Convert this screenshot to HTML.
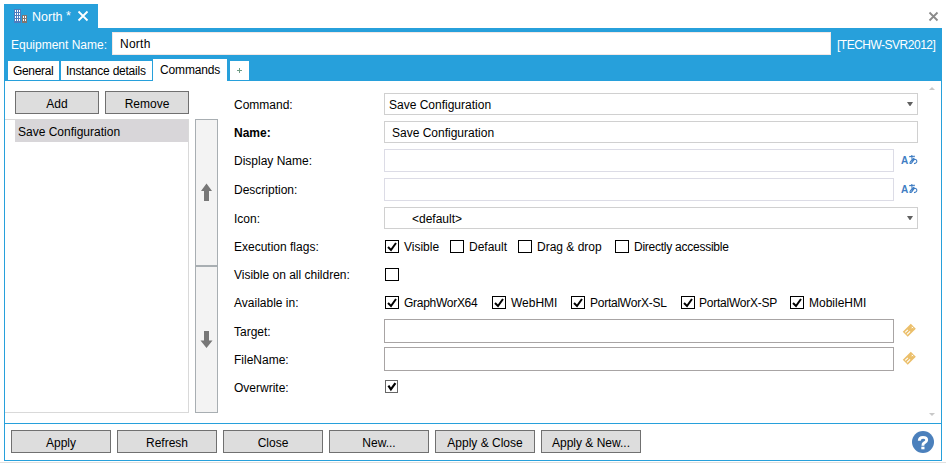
<!DOCTYPE html>
<html><head><meta charset="utf-8">
<style>
*{margin:0;padding:0;box-sizing:border-box}
html,body{width:946px;height:467px;overflow:hidden;background:#fff}
body{position:relative;font-family:"Liberation Sans",sans-serif;font-size:12px;color:#000}
.a{position:absolute}
.t{position:absolute;white-space:nowrap;line-height:14px;font-size:12px}
.blue{background:#27a0db}
.btn{position:absolute;background:#dddddd;border:1px solid #707070;text-align:center;line-height:24px;font-size:12px}
.cb{position:absolute;width:14px;height:13px;border:1px solid #000;background:#fff}
.cb svg{position:absolute;left:0;top:0}
.inp{position:absolute;border:1px solid #d0d0d0;background:#fff}
</style></head><body>

<!-- top tab -->
<div class="a blue" style="left:4px;top:4px;width:94px;height:24px"></div>
<svg class="a" style="left:14px;top:9px" width="14" height="14" viewBox="0 0 14 14">
  <rect x="0" y="0" width="7" height="14" fill="#4e7dbf"/>
  <g fill="#fff">
    <rect x="1" y="1" width="1" height="2"/><rect x="3" y="1" width="1" height="2"/><rect x="5" y="1" width="1" height="2"/>
    <rect x="1" y="4" width="1" height="2"/><rect x="3" y="4" width="1" height="2"/><rect x="5" y="4" width="1" height="2"/>
    <rect x="1" y="7" width="1" height="2"/><rect x="3" y="7" width="1" height="2"/><rect x="5" y="7" width="1" height="2"/>
    <rect x="1" y="10" width="1" height="2"/><rect x="3" y="10" width="1" height="2"/><rect x="5" y="10" width="1" height="2"/>
  </g>
  <rect x="8" y="6" width="5" height="8" fill="#83766f"/>
  <g fill="#fff">
    <rect x="9" y="7" width="1" height="2"/><rect x="11" y="7" width="1" height="2"/>
    <rect x="9" y="10" width="1" height="2"/><rect x="11" y="10" width="1" height="2"/>
  </g>
</svg>
<div class="t" style="left:32px;top:10px;color:#fff;font-size:12.5px">North <span style="position:relative;top:-1px">*</span></div>
<svg class="a" style="left:77px;top:10px" width="12" height="12" viewBox="0 0 12 12"><path d="M1.5 1.5L10.5 10.5M10.5 1.5L1.5 10.5" stroke="#fff" stroke-width="1.8"/></svg>

<!-- window close -->
<svg class="a" style="left:928px;top:11px" width="11" height="11" viewBox="0 0 11 11"><path d="M1.5 1.5L9.5 9.5M9.5 1.5L1.5 9.5" stroke="#8a8a8a" stroke-width="1.8"/></svg>

<!-- blue band -->
<div class="a blue" style="left:4px;top:28px;width:938px;height:53px"></div>
<div class="t" style="left:11px;top:38px;color:#fff">Equipment Name:</div>
<div class="a" style="left:112px;top:32px;width:719px;height:23px;background:#fff;border:1px solid #f2e8e6"></div>
<div class="t" style="left:120px;top:37px;letter-spacing:0.25px">North</div>
<div class="t" style="left:837px;top:38px;color:#fff;letter-spacing:-0.5px">[TECHW-SVR2012]</div>

<!-- tabs -->
<div class="a" style="left:8px;top:61px;width:51px;height:19px;background:#fff"></div>
<div class="t" style="left:13px;top:64px;letter-spacing:-0.32px">General</div>
<div class="a" style="left:61px;top:61px;width:91px;height:19px;background:#fff"></div>
<div class="t" style="left:66px;top:64px;letter-spacing:-0.23px">Instance details</div>
<div class="a" style="left:153px;top:59px;width:74px;height:23px;background:#fff"></div>
<div class="t" style="left:160px;top:63px;letter-spacing:-0.15px">Commands</div>
<div class="a" style="left:230px;top:61px;width:19px;height:19px;background:#fff"></div>
<svg class="a" style="left:237px;top:68px" width="5" height="5"><path d="M0 2.5H5M2.5 0V5" stroke="#6f9c86" stroke-width="1"/></svg>

<!-- content frame -->
<div class="a" style="left:4px;top:80px;width:938px;height:381px;border:1px solid #27a0db;border-top:1px solid #27a0db"></div>
<div class="a" style="left:153px;top:80px;width:74px;height:2px;background:#fff"></div>
<div class="a" style="left:5px;top:423px;width:936px;height:1px;background:#27a0db"></div>
<div class="a" style="left:0;top:462px;width:946px;height:1px;background:#e0e0e0"></div>

<!-- scroll arrows -->
<svg class="a" style="left:929px;top:87px" width="6" height="3"><path d="M0 3L3 0L6 3Z" fill="#c8c8c8"/></svg>
<svg class="a" style="left:929px;top:413px" width="6" height="3"><path d="M0 0L6 0L3 3Z" fill="#c8c8c8"/></svg>

<!-- left panel -->
<div class="btn" style="left:15px;top:91px;width:84px;height:23px">Add</div>
<div class="btn" style="left:105px;top:91px;width:84px;height:23px">Remove</div>
<div class="a" style="left:5px;top:119px;width:184px;height:294px;border:1px solid #d9d9d9;border-left:none"></div>
<div class="a" style="left:15px;top:120px;width:173px;height:22px;background:#d8d6d9"></div>
<div class="t" style="left:18px;top:125px">Save Configuration</div>

<!-- reorder -->
<div class="a" style="left:195px;top:119px;width:23px;height:294px;background:#f3f3f3;border:1px solid #a8aeb2"></div>
<div class="a" style="left:195px;top:265px;width:23px;height:2px;background:#a8aeb2"></div>
<svg class="a" style="left:200px;top:183px" width="13" height="19" viewBox="0 0 13 19"><path d="M6.5 0.5L12 8L9 8L9 18L4 18L4 8L1 8Z" fill="#777"/></svg>
<svg class="a" style="left:200px;top:330px" width="13" height="19" viewBox="0 0 13 19"><path d="M4 1L9 1L9 10.5L12.5 10.5L6.5 18L0.5 10.5L4 10.5Z" fill="#777"/></svg>

<!-- labels -->
<div class="t" style="left:234px;top:98px">Command:</div>
<div class="t" style="left:234px;top:126px;font-weight:bold">Name:</div>
<div class="t" style="left:234px;top:154px">Display Name:</div>
<div class="t" style="left:234px;top:183px">Description:</div>
<div class="t" style="left:234px;top:212px">Icon:</div>
<div class="t" style="left:234px;top:240px">Execution flags:</div>
<div class="t" style="left:234px;top:268px">Visible on all children:</div>
<div class="t" style="left:234px;top:296px">Available in:</div>
<div class="t" style="left:234px;top:325px">Target:</div>
<div class="t" style="left:234px;top:353px">FileName:</div>
<div class="t" style="left:234px;top:381px">Overwrite:</div>

<!-- inputs -->
<div class="inp" style="left:384px;top:93px;width:534px;height:22px"></div>
<div class="t" style="left:389px;top:98px">Save Configuration</div>
<svg class="a" style="left:907px;top:102px" width="6" height="4"><path d="M0 0L6 0L3.4 4L2.6 4Z" fill="#606060"/></svg>
<div class="inp" style="left:384px;top:121px;width:534px;height:22px"></div>
<div class="t" style="left:392px;top:126px">Save Configuration</div>
<div class="inp" style="left:384px;top:149px;width:510px;height:23px;border-color:#dcdce6"></div>
<div class="inp" style="left:384px;top:178px;width:510px;height:23px;border-color:#dcdce6"></div>
<div class="inp" style="left:384px;top:207px;width:534px;height:22px"></div>
<div class="t" style="left:412px;top:212px">&lt;default&gt;</div>
<svg class="a" style="left:907px;top:216px" width="6" height="4"><path d="M0 0L6 0L3.4 4L2.6 4Z" fill="#606060"/></svg>

<div class="t" style="left:901px;top:154px;color:#3f7dc3;font-weight:bold;font-size:10px">A</div><svg class="a" style="left:906px;top:152px" width="14" height="14" viewBox="0 0 14 14" fill="none" stroke="#3f7dc3" stroke-width="1.1"><path d="M3.2 4.6L9 4.3"/><path d="M5.8 3.1C5.9 5.5 6 8 6.4 10.2"/><path d="M8.4 5.9C6.8 7.4 4.6 9.2 4 10.6C3.7 11.5 4.4 11.9 5.3 11.2C6.3 10.4 7 9 7.8 7.9C8.6 7.1 10.4 7.2 10.8 8.8C11.1 10.3 10 11.3 8 11.6"/></svg>
<div class="t" style="left:901px;top:183px;color:#3f7dc3;font-weight:bold;font-size:10px">A</div><svg class="a" style="left:906px;top:181px" width="14" height="14" viewBox="0 0 14 14" fill="none" stroke="#3f7dc3" stroke-width="1.1"><path d="M3.2 4.6L9 4.3"/><path d="M5.8 3.1C5.9 5.5 6 8 6.4 10.2"/><path d="M8.4 5.9C6.8 7.4 4.6 9.2 4 10.6C3.7 11.5 4.4 11.9 5.3 11.2C6.3 10.4 7 9 7.8 7.9C8.6 7.1 10.4 7.2 10.8 8.8C11.1 10.3 10 11.3 8 11.6"/></svg>

<!-- checkboxes exec flags -->
<div class="cb" style="left:385px;top:240px"><svg width="12" height="11"><path d="M2 6L5 9L10 2" stroke="#000" stroke-width="2" fill="none"/></svg></div>
<div class="t" style="left:404px;top:240px">Visible</div>
<div class="cb" style="left:450px;top:240px"></div>
<div class="t" style="left:469px;top:240px">Default</div>
<div class="cb" style="left:518px;top:240px"></div>
<div class="t" style="left:537px;top:240px">Drag &amp; drop</div>
<div class="cb" style="left:615px;top:240px"></div>
<div class="t" style="left:634px;top:240px;letter-spacing:-0.25px">Directly accessible</div>

<div class="cb" style="left:385px;top:268px"></div>

<div class="cb" style="left:385px;top:296px"><svg width="12" height="11"><path d="M2 6L5 9L10 2" stroke="#000" stroke-width="2" fill="none"/></svg></div>
<div class="t" style="left:404px;top:296px;letter-spacing:-0.28px">GraphWorX64</div>
<div class="cb" style="left:492px;top:296px"><svg width="12" height="11"><path d="M2 6L5 9L10 2" stroke="#000" stroke-width="2" fill="none"/></svg></div>
<div class="t" style="left:511px;top:296px">WebHMI</div>
<div class="cb" style="left:571px;top:296px"><svg width="12" height="11"><path d="M2 6L5 9L10 2" stroke="#000" stroke-width="2" fill="none"/></svg></div>
<div class="t" style="left:590px;top:296px;letter-spacing:-0.25px">PortalWorX-SL</div>
<div class="cb" style="left:681px;top:296px"><svg width="12" height="11"><path d="M2 6L5 9L10 2" stroke="#000" stroke-width="2" fill="none"/></svg></div>
<div class="t" style="left:699px;top:296px;letter-spacing:-0.24px">PortalWorX-SP</div>
<div class="cb" style="left:790px;top:296px"><svg width="12" height="11"><path d="M2 6L5 9L10 2" stroke="#000" stroke-width="2" fill="none"/></svg></div>
<div class="t" style="left:809px;top:296px">MobileHMI</div>

<div class="inp" style="left:384px;top:319px;width:510px;height:24px;border-color:#a8a4a4"></div>
<div class="inp" style="left:384px;top:347px;width:510px;height:24px;border-color:#a8a4a4"></div>
<svg class="a" style="left:900px;top:320px" width="20" height="20" viewBox="0 0 20 20"><g transform="translate(9.5 10) rotate(-45)"><rect x="-6" y="-3.5" width="11.4" height="7" fill="#ebbf6a"/><path d="M-4.8 -1.3H-1M-4.8 1.3H-0.5" stroke="#fff" stroke-width="1.1"/><path d="M2.8 0.3H4.8M3.8 -0.7V1.3" stroke="#fff" stroke-width="0.9"/></g></svg>
<svg class="a" style="left:900px;top:348px" width="20" height="20" viewBox="0 0 20 20"><g transform="translate(9.5 10) rotate(-45)"><rect x="-6" y="-3.5" width="11.4" height="7" fill="#ebbf6a"/><path d="M-4.8 -1.3H-1M-4.8 1.3H-0.5" stroke="#fff" stroke-width="1.1"/><path d="M2.8 0.3H4.8M3.8 -0.7V1.3" stroke="#fff" stroke-width="0.9"/></g></svg>

<div class="cb" style="left:385px;top:380px;width:13px;border-color:#666"><svg width="11" height="11"><path d="M2.4 4.6L4.9 8.4L9.4 2.2" stroke="#000" stroke-width="2.2" fill="none"/></svg></div>

<!-- footer -->
<div class="btn" style="left:11px;top:430px;width:100px;height:23px">Apply</div>
<div class="btn" style="left:117px;top:430px;width:100px;height:23px">Refresh</div>
<div class="btn" style="left:223px;top:430px;width:100px;height:23px">Close</div>
<div class="btn" style="left:329px;top:430px;width:100px;height:23px">New...</div>
<div class="btn" style="left:435px;top:430px;width:100px;height:23px">Apply &amp; Close</div>
<div class="btn" style="left:541px;top:430px;width:100px;height:23px">Apply &amp; New...</div>

<svg class="a" style="left:912px;top:431px" width="22" height="22" viewBox="0 0 22 22"><circle cx="11" cy="11" r="11" fill="#4b80bc"/><path d="M7.3 9.8C7.3 7.2 9 6.4 11 6.4C13.2 6.4 14.7 7.4 14.7 9C14.7 10.8 13.2 11.3 12 12C11.2 12.5 10.9 12.9 10.9 14.8" stroke="#fff" stroke-width="2.9" fill="none"/><rect x="9.3" y="15.7" width="3.2" height="2.6" fill="#fff"/></svg>

</body></html>
